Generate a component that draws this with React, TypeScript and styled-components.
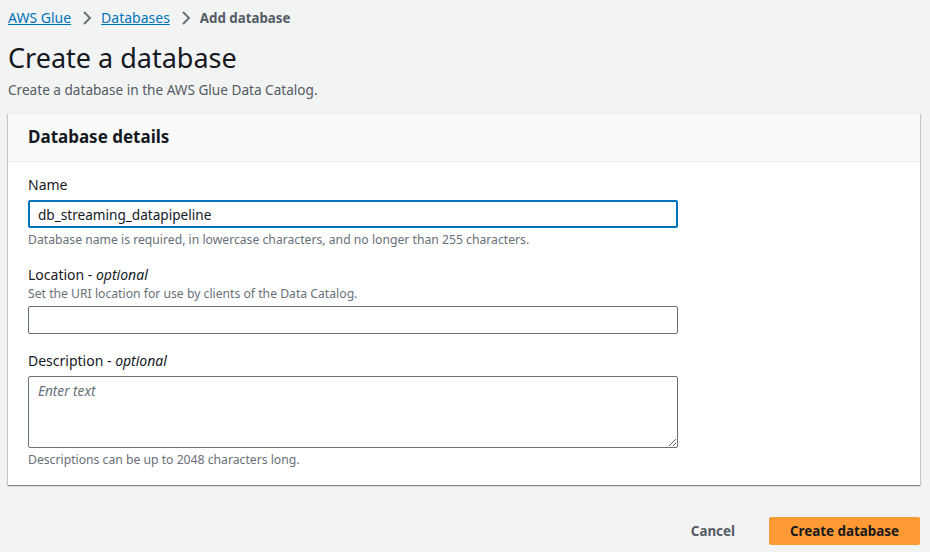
import React from "react";
import styled, { createGlobalStyle } from "styled-components";

const Global = createGlobalStyle`
  html, body { margin: 0; padding: 0; background: #f2f3f3; }
  body { font-family: "Noto Sans", "Open Sans", Arial, sans-serif; color: #16191f; }
  * { box-sizing: border-box; }
`;

const Page = styled.div`
  padding: 6px 10px 0 8px;
  display: flex;
  flex-direction: column;
  min-height: 552px;
`;

const Crumbs = styled.nav`
  display: flex;
  align-items: center;
  font-size: 14px;
  line-height: 24px;
  height: 24px;
`;

const CrumbLink = styled.a`
  color: #0073bb;
  text-decoration: underline;
  cursor: pointer;
`;

const CrumbCurrent = styled.span`
  color: #545b64;
  font-weight: 700;
  font-size: 13.3px;
`;

const Chevron = styled.svg`
  width: 10px;
  height: 16px;
  margin: 0 9px 0 11px;
  flex: none;
`;

const Title = styled.h1`
  margin: 10px 0 0;
  font-size: 27px;
  line-height: 36px;
  font-weight: 400;
  color: #16191f;
`;

const Subtitle = styled.p`
  margin: 3px 0 0;
  font-size: 13.6px;
  line-height: 22px;
  color: #545b64;
`;

const Card = styled.section`
  margin-top: 12px;
  background: #fff;
  box-shadow: 0 1px 1px 0 rgba(0, 28, 36, 0.3), 1px 1px 1px 0 rgba(0, 28, 36, 0.15),
    -1px 1px 1px 0 rgba(0, 28, 36, 0.15);
  border-top: 1px solid #eaeded;
`;

const CardHeader = styled.header`
  background: #fafafa;
  border-bottom: 1px solid #eaeded;
  padding: 11px 20px 12px;
`;

const CardTitle = styled.h2`
  margin: 0;
  font-size: 17px;
  line-height: 24px;
  font-weight: 700;
  color: #16191f;
`;

const CardBody = styled.div`
  padding: 12px 20px 17px;
  display: flex;
  flex-direction: column;
  gap: 16px;
`;

const Field = styled.div`
  display: flex;
  flex-direction: column;
`;

const Label = styled.label`
  font-size: 14px;
  line-height: 22px;
  color: #16191f;
  em { font-style: italic; }
`;

const Hint = styled.div<{ $below?: boolean }>`
  font-size: 12.2px;
  line-height: 16px;
  color: #687078;
  margin-top: ${(p) => (p.$below ? "4px" : "0")};
`;

const Control = styled.div`
  margin-top: 4px;
  width: 650px;
`;

const TextInput = styled.input<{ $focused?: boolean }>`
  display: block;
  width: 100%;
  height: 28px;
  padding: 0 ${(p) => (p.$focused ? "8px" : "9px")};
  font-family: inherit;
  font-size: 13.6px;
  color: #16191f;
  background: #fff;
  border: ${(p) => (p.$focused ? "2px solid #0073bb" : "1px solid #687078")};
  border-radius: 2px;
  outline: none;
`;

const TextArea = styled.textarea`
  display: block;
  width: 100%;
  height: 72px;
  padding: 3px 9px;
  font-family: inherit;
  font-size: 13.6px;
  line-height: 22px;
  color: #16191f;
  border: 1px solid #687078;
  border-radius: 2px;
  resize: vertical;
  outline: none;
  &::placeholder {
    color: #687078;
    font-style: italic;
  }
`;

const Actions = styled.div`
  margin-top: 32px;
  display: flex;
  justify-content: flex-end;
  align-items: center;
  gap: 14px;
`;

const LinkButton = styled.button`
  background: none;
  border: none;
  padding: 4px 20px;
  font-family: inherit;
  font-size: 13.4px;
  font-weight: 700;
  color: #545b64;
  cursor: pointer;
`;

const PrimaryButton = styled.button`
  width: 151px;
  height: 28px;
  background: #fe9a33;
  border: none;
  border-radius: 2px;
  font-family: inherit;
  font-size: 13.4px;
  font-weight: 700;
  color: #16191f;
  cursor: pointer;
`;

const ChevronIcon = () => (
  <Chevron viewBox="0 0 10 16" fill="none">
    <path d="M2 2l6 6-6 6" stroke="#687078" strokeWidth="2" strokeLinejoin="miter" />
  </Chevron>
);

export default function App() {
  return (
    <>
      <Global />
      <Page>
        <Crumbs>
          <CrumbLink>AWS Glue</CrumbLink>
          <ChevronIcon />
          <CrumbLink>Databases</CrumbLink>
          <ChevronIcon />
          <CrumbCurrent>Add database</CrumbCurrent>
        </Crumbs>
        <Title>Create a database</Title>
        <Subtitle>Create a database in the AWS Glue Data Catalog.</Subtitle>
        <Card>
          <CardHeader>
            <CardTitle>Database details</CardTitle>
          </CardHeader>
          <CardBody>
            <Field>
              <Label>Name</Label>
              <Control>
                <TextInput $focused defaultValue="db_streaming_datapipeline" />
              </Control>
              <Hint $below>
                Database name is required, in lowercase characters, and no longer than 255 characters.
              </Hint>
            </Field>
            <Field>
              <Label>
                Location - <em>optional</em>
              </Label>
              <Hint>Set the URI location for use by clients of the Data Catalog.</Hint>
              <Control>
                <TextInput />
              </Control>
            </Field>
            <Field>
              <Label>
                Description - <em>optional</em>
              </Label>
              <Control>
                <TextArea placeholder="Enter text" />
              </Control>
              <Hint $below>Descriptions can be up to 2048 characters long.</Hint>
            </Field>
          </CardBody>
        </Card>
        <Actions>
          <LinkButton>Cancel</LinkButton>
          <PrimaryButton>Create database</PrimaryButton>
        </Actions>
      </Page>
    </>
  );
}
